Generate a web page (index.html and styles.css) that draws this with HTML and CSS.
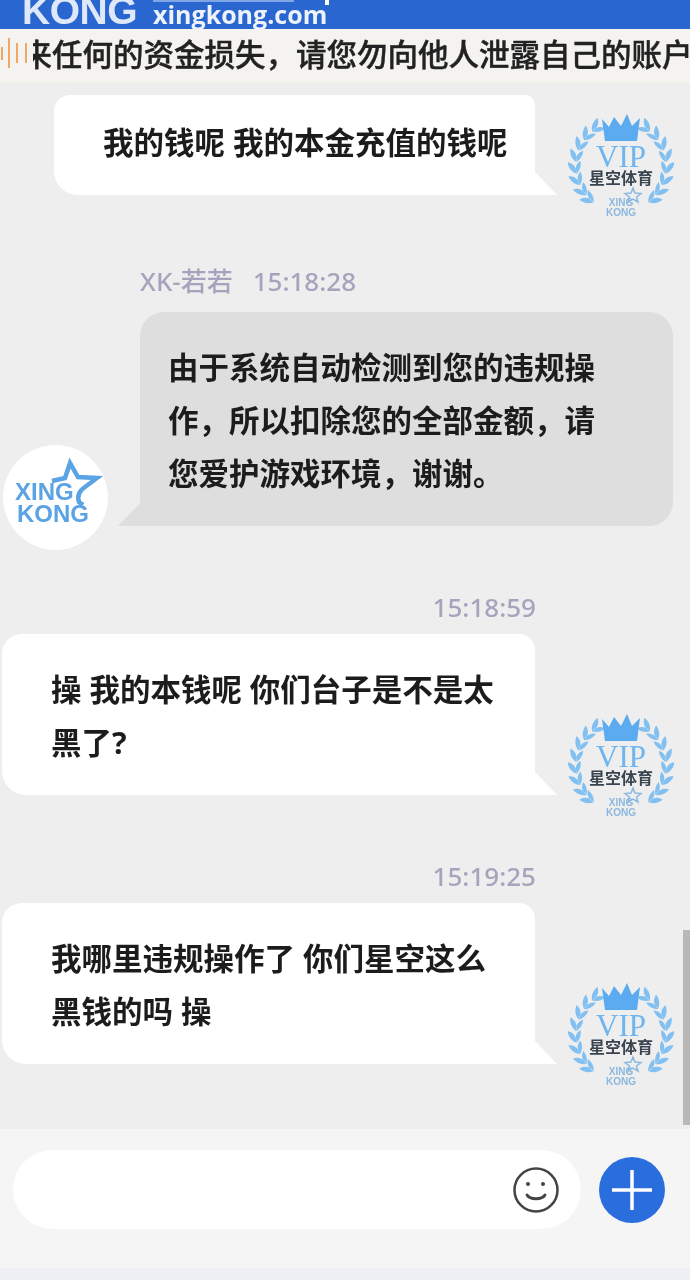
FILE: index.html
```html
<!DOCTYPE html>
<html lang="zh-CN">
<head>
    <meta charset="UTF-8">
    <meta name="viewport" content="width=device-width, initial-scale=1.0">
    <title>在线客服</title>
    <link rel="stylesheet" href="styles.css">
</head>
<body>
    <svg class="defs" width="0" height="0">
        <defs>
            <path id="sprig" d="M53 8c3-5 7-7 13-7c-2 5-6 8-13 7zM53 8c3 4 7 6 12 6c-2-5-6-7-12-6z"/>
            <g id="wreath-half">
                <use href="#sprig" transform="rotate(-40 53 53)"/>
                <use href="#sprig" transform="rotate(-55 53 53)"/>
                <use href="#sprig" transform="rotate(-70 53 53)"/>
                <use href="#sprig" transform="rotate(-85 53 53)"/>
                <use href="#sprig" transform="rotate(-100 53 53)"/>
                <use href="#sprig" transform="rotate(-115 53 53)"/>
                <use href="#sprig" transform="rotate(-130 53 53)"/>
                <use href="#sprig" transform="rotate(-143 53 53)"/>
            </g>
            <symbol id="vip" viewBox="0 0 106 106">
                <g fill="#82c0f2">
                    <use href="#wreath-half"/>
                    <use href="#wreath-half" transform="translate(106 0) scale(-1 1)"/>
                </g>
                <path d="M37 28L34 6l7 8l5-10l7 9l6-12l5 12l8-8l-3 23z" fill="#5cabf0"/>
                <text x="53" y="54" class="vip-word">VIP</text>
                <text x="53" y="71" class="vip-cn">星空体育</text>
                <path d="M65 75l2 5l6 .5l-4.500 3.500l1.500 5l-5-3l-5 3l1.500-5l-4.500-3.500l6-.5z" fill="none" stroke="#8cb8e0" stroke-width="1.500"/>
                <text x="53" y="93" class="vip-small">XING</text>
                <text x="53" y="103" class="vip-small">KONG</text>
            </symbol>
        </defs>
    </svg>

    <div class="page">
        <header class="top-bar">
            <span class="logo-big">KONG</span>
            <div class="logo-side">
                <div class="logo-cut"><span class="cut-line"></span><span class="cut-dot"></span></div>
                <span class="logo-url">xingkong.com</span>
            </div>
        </header>

        <div class="notice">
            <svg class="notice-icon" width="33" height="32" viewBox="0 0 33 32">
                <g stroke="#f0a868" stroke-width="2">
                    <path d="M2 10v13"/><path d="M9 1v30"/><path d="M17 6v20"/><path d="M26 6v20"/>
                </g>
            </svg>
            <div class="notice-track"><span class="notice-text">带来任何的资金损失，请您勿向他人泄露自己的账户</span></div>
        </div>

        <main class="chat">
            <div class="msg msg-self">
                <div class="msg-body">
                    <div class="bubble bubble-self bubble-first">我的钱呢 我的本金充值的钱呢</div>
                </div>
                <svg class="avatar"><use href="#vip"/></svg>
            </div>

            <div class="msg msg-agent">
                <div class="agent-avatar">
                    <svg width="105" height="105" viewBox="0 0 105 105">
                        <path d="M49 36l13-3l5-15l8 14l19 1l-12 9c-6 4-8 9-6 15l4 3" fill="none" stroke="#5aa3e4" stroke-width="4.500"/>
                        <text x="12" y="55" class="agent-word">XING</text>
                        <text x="14" y="77" class="agent-word">KONG</text>
                    </svg>
                </div>
                <div class="msg-body">
                    <div class="meta meta-name"><span>XK-若若</span><span>15:18:28</span></div>
                    <div class="bubble bubble-agent">由于系统自动检测到您的违规操作，所以扣除您的全部金额，请您爱护游戏环境，谢谢。</div>
                </div>
            </div>

            <div class="msg msg-self">
                <div class="msg-body">
                    <div class="meta meta-time">15:18:59</div>
                    <div class="bubble bubble-self">操 我的本钱呢 你们台子是不是太黑了?</div>
                </div>
                <svg class="avatar"><use href="#vip"/></svg>
            </div>

            <div class="msg msg-self">
                <div class="msg-body">
                    <div class="meta meta-time">15:19:25</div>
                    <div class="bubble bubble-self">我哪里违规操作了 你们星空这么黑钱的吗 操</div>
                </div>
                <svg class="avatar"><use href="#vip"/></svg>
            </div>

            <div class="scroll-thumb"></div>
        </main>

        <div class="input-bar">
            <div class="input-pill">
                <svg width="48" height="48" viewBox="0 0 48 48" fill="none" stroke="#444" stroke-width="2.500">
                    <circle cx="24" cy="24" r="21.500"/>
                    <path d="M15 29c3 5 15 5 18 0" stroke-width="3" stroke-linecap="round"/>
                    <circle cx="16" cy="18" r="2" fill="#444" stroke="none"/>
                    <circle cx="31" cy="18" r="2" fill="#444" stroke="none"/>
                </svg>
            </div>
            <button class="plus-btn" type="button" aria-label="more">
                <svg width="40" height="40" viewBox="0 0 40 40" stroke="#fff" stroke-width="3.500">
                    <path d="M0 20h40"/><path d="M20 0v40"/>
                </svg>
            </button>
        </div>
        <div class="bottom-strip"></div>
    </div>
</body>
</html>
```

FILE: styles.css
```css
* {
  box-sizing: border-box;
}
html, body {
  margin: 0;
  padding: 0;
}
body {
  font-family: "Noto Sans", "Noto Sans CJK SC", sans-serif;
  background: #eeeeee;
}
.defs {
  display: block;
  height: 0;
}
.page {
  width: 690px;
  height: 1280px;
  display: flex;
  flex-direction: column;
  overflow: hidden;
  filter: blur(0.5px);
}

/* top bar, the logo is cut off by the top of the window */
.top-bar {
  height: 29px;
  flex: none;
  display: flex;
  align-items: flex-start;
  gap: 16px;
  padding-left: 22px;
  overflow: hidden;
  background: #2a66cf;
  color: #dfe8f8;
}
.logo-big {
  font-family: "Liberation Sans", sans-serif;
  font-size: 39px;
  font-weight: 700;
  line-height: 22px;
  letter-spacing: -0.5px;
}
.logo-side {
  display: flex;
  flex-direction: column;
  height: 29px;
}
.logo-cut {
  height: 3px;
  display: flex;
  gap: 31px;
}
.cut-line {
  width: 141px;
  height: 2px;
  background: #7fa5e4;
}
.cut-dot {
  width: 4px;
  height: 5px;
  background: #fff;
}
.logo-url {
  font-family: "Open Sans", sans-serif;
  font-size: 25px;
  font-weight: 700;
  line-height: 22px;
  color: #eef3fb;
}

.notice {
  height: 54px;
  flex: none;
  display: flex;
  align-items: flex-start;
  background: #f5f3f0;
}
.notice-icon {
  flex: none;
  margin-top: 8px;
}
.notice-track {
  flex: 1;
  min-width: 0;
  overflow: hidden;
  white-space: nowrap;
}
.notice-text {
  display: block;
  margin-left: -42px;
  font-size: 30.5px;
  font-weight: 500;
  line-height: 50px;
  color: #222;
  -webkit-text-stroke: 0.4px #222;
}

.chat {
  position: relative;
  height: 1046px;
  flex: none;
  padding-top: 12px;
  overflow: hidden;
  background: #eeeeee;
}
.msg {
  display: flex;
  align-items: flex-end;
  margin-top: 40px;
}
.msg:first-child {
  margin-top: 0;
}
.msg-self {
  padding-left: 2px;
}
.msg-agent {
  margin-top: 45px;
  padding-left: 3px;
}
.msg-body {
  width: 533px;
  flex: none;
  display: flex;
  flex-direction: column;
  padding-bottom: 24px;
}
.avatar {
  width: 106px;
  height: 106px;
  flex: none;
  margin-left: 33px;
}
.agent-avatar {
  width: 105px;
  height: 105px;
  flex: none;
  margin-right: 32px;
  border-radius: 50%;
  background: #fff;
}

.meta {
  font-size: 26px;
  font-weight: 500;
  line-height: 35px;
  color: #a8a3bd;
}
.meta-time {
  margin-right: -1px;
  margin-bottom: 9px;
  text-align: right;
}
.meta-name {
  display: flex;
  gap: 20px;
  margin-bottom: 13px;
}

.bubble {
  position: relative;
  padding: 29px 28px 26px 49px;
  font-size: 30.5px;
  font-weight: 700;
  line-height: 53px;
  color: #1c1c1c;
}
.bubble::after {
  content: "";
  position: absolute;
  bottom: 0;
  width: 22px;
  height: 23px;
}
.bubble-self {
  background: #fff;
  border-radius: 20px 16px 0 24px;
}
.bubble-self::after {
  left: 100%;
  background: #fff;
  clip-path: polygon(0 0, 100% 100%, 0 100%);
}
.bubble-first {
  margin-left: 52px;
  padding: 21px 20px 26px 49px;
  border-radius: 16px 10px 0 24px;
}
.bubble-agent {
  padding-left: 28px;
  padding-right: 70px;
  background: #dedede;
  border-radius: 24px 24px 24px 0;
}
.bubble-agent::after {
  right: 100%;
  background: #dedede;
  clip-path: polygon(100% 0, 100% 100%, 0 100%);
}

.scroll-thumb {
  position: absolute;
  right: 0;
  bottom: 4px;
  width: 7px;
  height: 195px;
  background: #b8b8b8;
}

.input-bar {
  height: 139px;
  flex: none;
  display: flex;
  align-items: flex-start;
  gap: 18px;
  padding: 21px 25px 0 13px;
  background: #f5f5f5;
}
.input-pill {
  width: 568px;
  height: 79px;
  display: flex;
  align-items: center;
  justify-content: flex-end;
  padding-right: 21px;
  border-radius: 40px;
  background: #fff;
}
.plus-btn {
  width: 66px;
  height: 66px;
  flex: none;
  display: flex;
  align-items: center;
  justify-content: center;
  margin-top: 7px;
  padding: 0;
  border: 0;
  border-radius: 50%;
  background: #2a6ddd;
}
.bottom-strip {
  height: 12px;
  flex: none;
  background: #eef0f6;
}

/* text inside the avatars */
.vip-word {
  font-family: "Liberation Serif", serif;
  font-size: 31px;
  text-anchor: middle;
  fill: #6fb5f0;
}
.vip-cn {
  font-family: "Noto Sans CJK SC", sans-serif;
  font-size: 16px;
  font-weight: 700;
  text-anchor: middle;
  fill: #3a4450;
}
.vip-small {
  font-family: "Liberation Sans", sans-serif;
  font-size: 10px;
  font-weight: 700;
  text-anchor: middle;
  fill: #8cb8e0;
}
.agent-word {
  font-family: "Liberation Sans", sans-serif;
  font-size: 24px;
  font-weight: 700;
  fill: #5aa3e4;
}
```
